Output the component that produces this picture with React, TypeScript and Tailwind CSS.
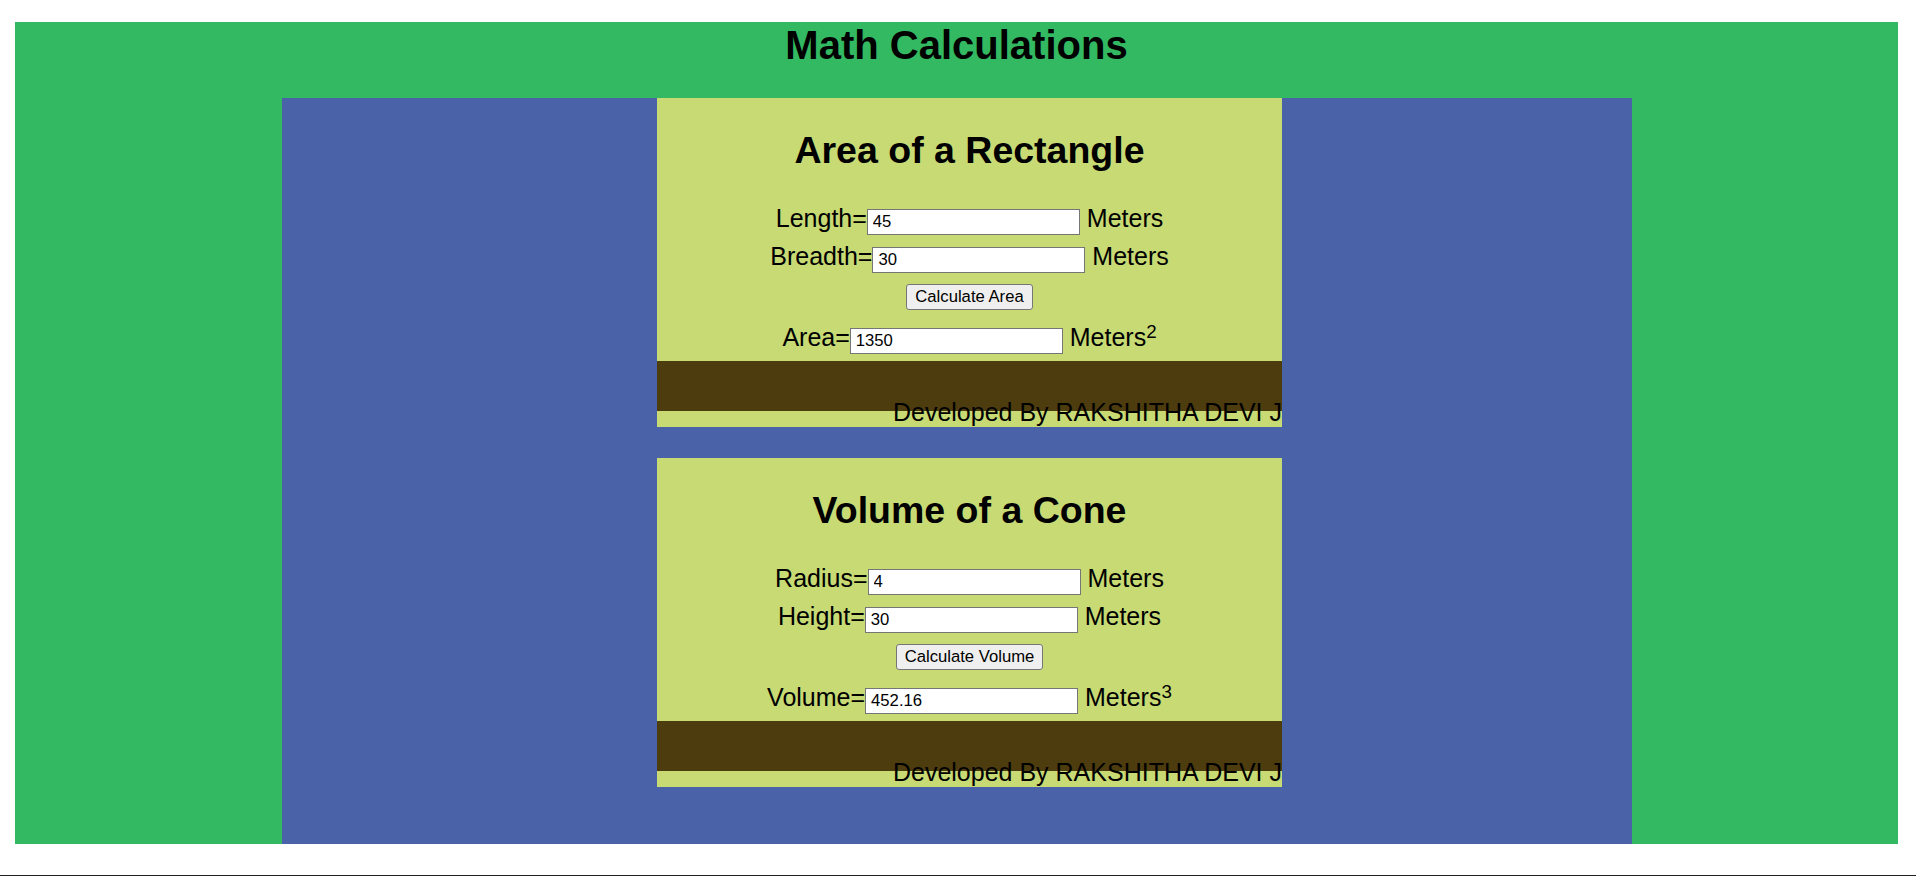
import { useState } from "react";

const inputCls =
  "w-[213px] h-[26px] border border-[#767676] bg-white pl-[5px] text-[16.67px] text-black align-baseline outline-none";
const btnCls =
  "h-[26px] px-[8px] border border-[#767676] bg-[#efefef] rounded-[3px] text-[16.67px] text-black leading-none";
const rowCls = "h-[38px] text-center text-[25px] leading-[29px] whitespace-nowrap";

const Footer = () => (
  <>
    <div className="h-[50px] bg-[#4d3c0e]" />
    <div className="-mt-[13px] text-right text-[25px] leading-[29px] text-black">
      Developed By RAKSHITHA DEVI J
    </div>
  </>
);

const AreaCard = () => {
  const [length, setLength] = useState("45");
  const [breadth, setBreadth] = useState("30");
  const [area, setArea] = useState("1350");

  return (
    <div className="w-[625px] bg-[#c7da74] pt-[31px]">
      <h2 className="text-center text-[37.5px] leading-[42px] font-bold">Area of a Rectangle</h2>
      <div className={`${rowCls} mt-[33px]`}>
        Length=<input className={inputCls} value={length} onChange={(e) => setLength(e.target.value)} /> Meters
      </div>
      <div className={rowCls}>
        Breadth=<input className={inputCls} value={breadth} onChange={(e) => setBreadth(e.target.value)} /> Meters
      </div>
      <div className="mt-[4px] flex h-[26px] justify-center">
        <button className={btnCls} onClick={() => setArea(String(Number(length) * Number(breadth)))}>
          Calculate Area
        </button>
      </div>
      <div className={`${rowCls} mt-[13px]`}>
        Area=<input className={inputCls} value={area} readOnly /> Meters
        <sup className="text-[18.75px] top-[-8px]">2</sup>
      </div>
      <Footer />
    </div>
  );
};

const ConeCard = () => {
  const [radius, setRadius] = useState("4");
  const [height, setHeight] = useState("30");
  const [volume, setVolume] = useState("452.16");

  return (
    <div className="mt-[31px] w-[625px] bg-[#c7da74] pt-[31px]">
      <h2 className="text-center text-[37.5px] leading-[42px] font-bold">Volume of a Cone</h2>
      <div className={`${rowCls} mt-[33px]`}>
        Radius=<input className={inputCls} value={radius} onChange={(e) => setRadius(e.target.value)} /> Meters
      </div>
      <div className={rowCls}>
        Height=<input className={inputCls} value={height} onChange={(e) => setHeight(e.target.value)} /> Meters
      </div>
      <div className="mt-[4px] flex h-[26px] justify-center">
        <button
          className={btnCls}
          onClick={() => {
            const r = Number(radius);
            const h = Number(height);
            setVolume(((3.14 * r * r * h) / 3).toFixed(2));
          }}
        >
          Calculate Volume
        </button>
      </div>
      <div className={`${rowCls} mt-[13px]`}>
        Volume=<input className={inputCls} value={volume} readOnly /> Meters
        <sup className="text-[18.75px] top-[-8px]">3</sup>
      </div>
      <Footer />
    </div>
  );
};

export default function App() {
  return (
    <div className="h-[876px] w-full bg-white pt-[22px] border-b border-[#202020] font-['Liberation_Sans',Arial,sans-serif] text-black">
      <div className="ml-[15px] mr-[18px] h-[822px] bg-[#32b961]">
        <h1 className="text-center text-[40px] leading-[46px] font-bold">Math Calculations</h1>

        <div className="mt-[30px] ml-[267px] h-[746px] w-[1350px] bg-[#4a63a8] pl-[375px]">
          <AreaCard />
          <ConeCard />
        </div>
      </div>
    </div>
  );
}
